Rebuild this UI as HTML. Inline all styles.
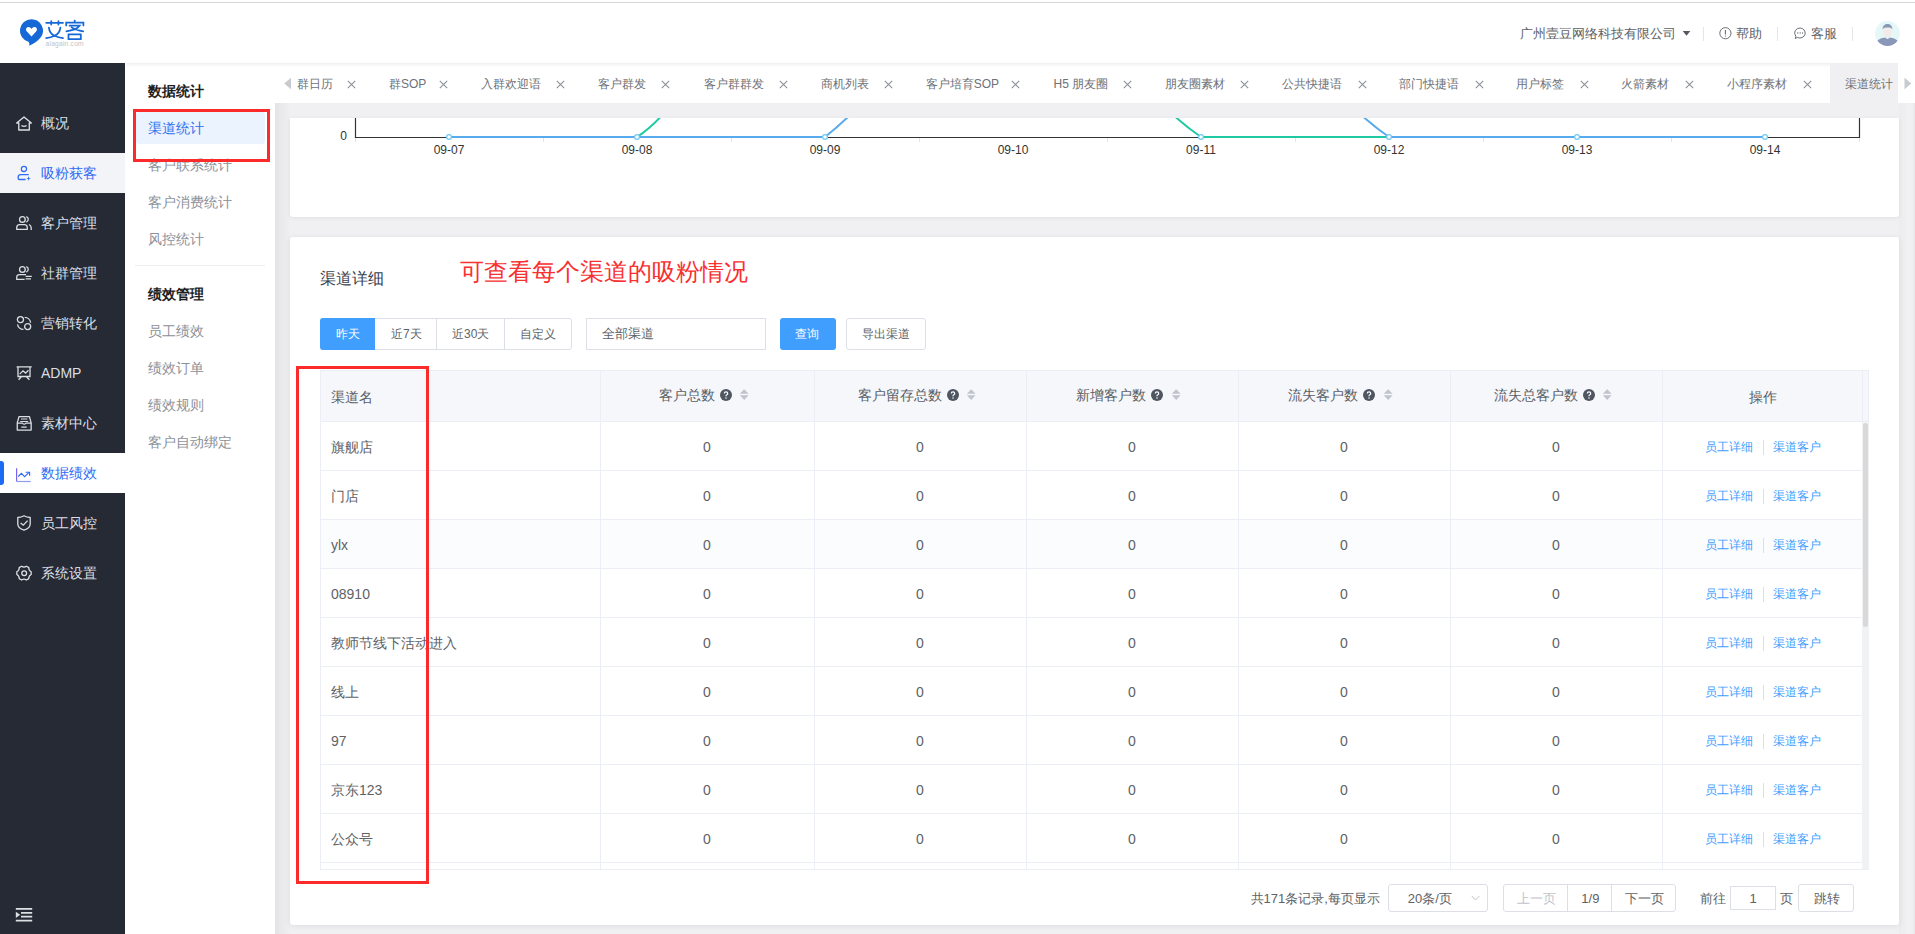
<!DOCTYPE html><html><head><meta charset="utf-8"><style>
*{box-sizing:border-box;margin:0;padding:0}
html,body{width:1915px;height:934px;overflow:hidden;background:#fff;font-family:"Liberation Sans",sans-serif;color:#606266}
.a{position:absolute;white-space:nowrap}
.t{position:absolute;white-space:nowrap;line-height:20px;height:20px}
svg{position:absolute;overflow:visible}
</style></head><body>
<div class="a" style="left:0px;top:0px;width:1915px;height:63px;background:#fff"></div>
<div class="a" style="left:0px;top:2px;width:1915px;height:1px;background:#d7d8db"></div>
<svg style="left:0;top:0" width="100" height="60" viewBox="0 0 100 60">
<path d="M31.4 19.2 A11.5 11.5 0 0 1 40.6 37.6 C37.5 41.5 33 44 29.3 45.8 C29.6 43.8 29.3 42.5 28.4 41.8 A11.5 11.5 0 0 1 31.4 19.2 Z" fill="#1668d6"/>
<path d="M31.5 36.4 L26.9 31.6 C25.3 29.8 26.1 27 28.6 27 C30 27 31 28 31.5 29 C32 28 33 27 34.4 27 C36.9 27 37.7 29.8 36.1 31.6 Z" fill="#fff"/>
</svg>
<svg style="left:0;top:0" width="100" height="60" viewBox="0 0 100 60"><g fill="none" stroke="#1668d6" stroke-width="1.75" stroke-linecap="round">
<path d="M46.2 22.8 H63"/><path d="M51.2 21 V24.6 M58.4 21 V24.6"/>
<path d="M48.9 27.6 Q49.5 33.5 54.6 35.8 Q59.7 33.5 60.4 27.6"/>
<path d="M46.2 38.2 Q51 37.6 54.6 35.8 Q58.2 37.6 63 38.2"/>
<path d="M74.7 20.6 V22.2"/><path d="M66.2 25.4 V22.7 H83.4 V25.4"/>
<path d="M69.6 25.7 H79.6 Q77.5 28.4 74.6 29.4 Q71.2 30.6 66.4 31.4 M71.6 27.4 Q76 30.4 83.2 31.4"/>
<path d="M68.5 34.4 H80.8 V39.1 H68.5 Z"/>
</g></svg>
<div class="a" style="left:45.5px;top:39.8px;font-size:6.6px;line-height:8px;color:#c0c2c6;letter-spacing:0.25px">aiagain.com</div>
<div class="a" style="left:1519.5px;top:23.5px;line-height:20px;font-size:13px;color:#606266;">广州壹豆网络科技有限公司</div>
<svg style="left:1682px;top:30px" width="10" height="7"><path d="M0.7 1 L8.3 1 L4.5 5.8 Z" fill="#555a61"/></svg>
<div class="a" style="left:1703px;top:27px;width:1px;height:14px;background:#e4e6ea"></div>
<svg style="left:1719px;top:27px" width="13" height="13"><circle cx="6.4" cy="6.2" r="5.6" fill="none" stroke="#6a6e75" stroke-width="1"/><path d="M6.4 3 V7.4" stroke="#6a6e75" stroke-width="1.1"/><circle cx="6.4" cy="9.1" r="0.65" fill="#6a6e75"/></svg>
<div class="a" style="left:1736px;top:23.5px;line-height:20px;font-size:13px;color:#606266;">帮助</div>
<div class="a" style="left:1777px;top:27px;width:1px;height:14px;background:#e4e6ea"></div>
<svg style="left:1794px;top:27px" width="13" height="13"><path d="M6.2 1 A5.3 5 0 1 1 3.6 10.5 L1.2 11.4 L1.9 9.2 A5.3 5 0 0 1 6.2 1 Z" fill="none" stroke="#6a6e75" stroke-width="1"/><circle cx="3.8" cy="6" r="0.65" fill="#6a6e75"/><circle cx="6.2" cy="6" r="0.65" fill="#6a6e75"/><circle cx="8.6" cy="6" r="0.65" fill="#6a6e75"/></svg>
<div class="a" style="left:1811px;top:23.5px;line-height:20px;font-size:13px;color:#606266;">客服</div>
<div class="a" style="left:1852px;top:27px;width:1px;height:14px;background:#e4e6ea"></div>
<svg style="left:1875px;top:21px" width="25" height="25" viewBox="0 0 25 25">
<defs><clipPath id="av"><circle cx="12.5" cy="12.5" r="12.4"/></clipPath></defs>
<circle cx="12.5" cy="12.5" r="12.4" fill="#e6f7f7"/>
<g clip-path="url(#av)">
<ellipse cx="12.5" cy="11" rx="4.2" ry="5.2" fill="#f3eaea"/>
<path d="M7.6 8.4 C7.6 4.6 10 3 12.5 3 C15 3 17.4 4.6 17.4 8.4 C16.5 7 15.5 6.6 12.5 6.6 C9.5 6.6 8.5 7 7.6 8.4 Z" fill="#8b97b8"/>
<path d="M1.8 20.2 C4.5 17.4 8.5 16.9 10.5 16.6 C11 17.6 11.7 18 12.5 18 C13.3 18 14 17.6 14.5 16.6 C16.5 16.9 20.5 17.4 23.2 20.2 L23.2 26 L1.8 26 Z" fill="#8b97b8"/>
</g></svg>
<div class="a" style="left:0px;top:63px;width:125px;height:871px;background:#252a34"></div>
<svg style="left:16px;top:115px" width="17" height="17" viewBox="0 0 17 17"><path d="M2.8 15 V8 H0.7 L8 1.9 L15.3 8 H13.3 V15 Z" fill="none" stroke="#dcdfe4" stroke-width="1.35" stroke-linejoin="round"/><path d="M5.4 10.5 Q8 12.4 10.6 10.5" fill="none" stroke="#dcdfe4" stroke-width="1.3"/></svg>
<div class="a" style="left:41px;top:113.0px;line-height:20px;font-size:14px;color:#dcdfe4;">概况</div>
<div class="a" style="left:0px;top:153px;width:125px;height:40px;background:#f3f4f7"></div>
<svg style="left:16px;top:165px" width="17" height="17" viewBox="0 0 17 17"><circle cx="7.95" cy="3.9" r="2.6" fill="none" stroke="#2f6bf5" stroke-width="1.3"/><path d="M12.7 9.6 H4.8 Q2.2 9.6 2.2 12.2 V13.4 Q2.2 14.5 3.3 14.5 H9.6" fill="none" stroke="#2f6bf5" stroke-width="1.3"/><path d="M12.6 11.1 L13.15 12.95 L15 13.5 L13.15 14.05 L12.6 15.9 L12.05 14.05 L10.2 13.5 L12.05 12.95 Z" fill="#2f6bf5"/></svg>
<div class="a" style="left:41px;top:163.0px;line-height:20px;font-size:14px;color:#2f6bf5;">吸粉获客</div>
<svg style="left:16px;top:215px" width="17" height="17" viewBox="0 0 17 17"><circle cx="6.4" cy="4.4" r="2.85" fill="none" stroke="#dcdfe4" stroke-width="1.3"/><path d="M10.3 1.6 A2.9 2.9 0 0 1 10.3 7.1" fill="none" stroke="#dcdfe4" stroke-width="1.3"/><path d="M0.75 14.35 V12.4 Q0.75 9.55 3.6 9.55 H8.4 Q11.25 9.55 11.25 12.4 V14.35 Z" fill="none" stroke="#dcdfe4" stroke-width="1.3"/><path d="M12.9 9.5 Q15.2 10.4 15.2 13 V15" fill="none" stroke="#dcdfe4" stroke-width="1.3"/></svg>
<div class="a" style="left:41px;top:213.0px;line-height:20px;font-size:14px;color:#dcdfe4;">客户管理</div>
<svg style="left:16px;top:265px" width="17" height="17" viewBox="0 0 17 17"><circle cx="6.4" cy="4.4" r="2.85" fill="none" stroke="#dcdfe4" stroke-width="1.3"/><path d="M10.3 1.6 A2.9 2.9 0 0 1 10.3 7.1" fill="none" stroke="#dcdfe4" stroke-width="1.3"/><path d="M10 9.55 H3.6 Q0.75 9.55 0.75 12.4 V14.35 H8.6" fill="none" stroke="#dcdfe4" stroke-width="1.3"/><path d="M9.6 11.45 H15.8 M9.6 13.9 H15" stroke="#dcdfe4" stroke-width="1.3"/></svg>
<div class="a" style="left:41px;top:263.0px;line-height:20px;font-size:14px;color:#dcdfe4;">社群管理</div>
<svg style="left:16px;top:315px" width="17" height="17" viewBox="0 0 17 17"><circle cx="4.45" cy="4.6" r="3.05" fill="none" stroke="#dcdfe4" stroke-width="1.3"/><circle cx="11.65" cy="11.6" r="3.05" fill="none" stroke="#dcdfe4" stroke-width="1.3"/><path d="M8.7 2.3 A6 6 0 0 1 14.6 7.7" fill="none" stroke="#dcdfe4" stroke-width="1.3"/><path d="M1.5 9.3 A6 6 0 0 0 7.5 14.3" fill="none" stroke="#dcdfe4" stroke-width="1.3"/></svg>
<div class="a" style="left:41px;top:313.0px;line-height:20px;font-size:14px;color:#dcdfe4;">营销转化</div>
<svg style="left:16px;top:365px" width="17" height="17" viewBox="0 0 17 17"><path d="M0.6 1.8 H15.7 M2 1.8 V11.5 H14 V1.8 M5.3 11.8 L2.6 14.8 M10.5 11.8 L13.4 14.8" fill="none" stroke="#dcdfe4" stroke-width="1.3"/><path d="M3.7 9.1 L7.05 5.8 L9.6 8.1 L12.5 5.3" fill="none" stroke="#dcdfe4" stroke-width="1.3"/></svg>
<div class="a" style="left:41px;top:363.0px;line-height:20px;font-size:14px;color:#dcdfe4;">ADMP</div>
<svg style="left:16px;top:415px" width="17" height="17" viewBox="0 0 17 17"><path d="M1.25 7.9 L3 1.6 H13.4 L15.15 7.9 V15.1 H1.25 Z" fill="none" stroke="#dcdfe4" stroke-width="1.3" stroke-linejoin="round"/><path d="M1.25 8.1 H6.4 Q8.2 10.3 10 8.1 H15.15 M5 4 H11.4 M4.2 6.5 H12.2 M5.3 12.2 H10.7" fill="none" stroke="#dcdfe4" stroke-width="1.2"/></svg>
<div class="a" style="left:41px;top:413.0px;line-height:20px;font-size:14px;color:#dcdfe4;">素材中心</div>
<div class="a" style="left:0px;top:453px;width:125px;height:40px;background:#fff"></div>
<div class="a" style="left:0;top:461px;width:4px;height:24px;background:#1d6af5;border-radius:0 3px 3px 0"></div>
<svg style="left:16px;top:465px" width="17" height="17" viewBox="0 0 17 17"><path d="M0.6 3.2 V16.5" fill="none" stroke="#7a63f2" stroke-width="1.2"/><path d="M0.6 16.5 H14.8" fill="none" stroke="#8b9cf4" stroke-width="1.2"/><path d="M2.3 11.5 L5.4 8.4 L8.6 11.7 L13 7.4" fill="none" stroke="#2f6bf5" stroke-width="1.1"/><path d="M9.6 7.2 H13.6 V10.8" fill="none" stroke="#2f6bf5" stroke-width="1.1"/></svg>
<div class="a" style="left:41px;top:463.0px;line-height:20px;font-size:14px;color:#2f6bf5;">数据绩效</div>
<svg style="left:16px;top:515px" width="17" height="17" viewBox="0 0 17 17"><path d="M8 0.8 Q10.5 2.4 14.2 2.5 V9 Q14.2 13.2 8 15.1 Q1.8 13.2 1.8 9 V2.5 Q5.5 2.4 8 0.8 Z" fill="none" stroke="#dcdfe4" stroke-width="1.3" stroke-linejoin="round"/><path d="M4.6 7.9 L7.3 10.2 L11.6 5.6" fill="none" stroke="#dcdfe4" stroke-width="1.3"/></svg>
<div class="a" style="left:41px;top:513.0px;line-height:20px;font-size:14px;color:#dcdfe4;">员工风控</div>
<svg style="left:16px;top:565px" width="17" height="17" viewBox="0 0 17 17"><path d="M15.17 6.71 L15.17 9.49 Q12.59 10.75 12.79 13.61 L10.38 15.00 Q8.00 13.40 5.62 15.00 L3.21 13.61 Q3.41 10.75 0.83 9.49 L0.83 6.71 Q3.41 5.45 3.21 2.59 L5.62 1.20 Q8.00 2.80 10.38 1.20 L12.79 2.59 Q12.59 5.45 15.17 6.71 Z" fill="none" stroke="#dcdfe4" stroke-width="1.3" stroke-linejoin="round"/><circle cx="8.2" cy="8.3" r="2.4" fill="none" stroke="#dcdfe4" stroke-width="1.3"/></svg>
<div class="a" style="left:41px;top:563.0px;line-height:20px;font-size:14px;color:#dcdfe4;">系统设置</div>
<svg style="left:15px;top:907px" width="18" height="15" viewBox="0 0 18 15"><path d="M0.8 1.8 H17.2 M6 5.8 H17.2 M6 9.7 H17.2 M0.8 13.7 H17.2" stroke="#dcdfe4" stroke-width="1.8"/><path d="M0.8 4.7 L5.2 7.8 L0.8 10.9 Z" fill="#dcdfe4"/></svg>
<div class="a" style="left:125px;top:63px;width:150px;height:871px;background:#fff"></div>
<div class="a" style="left:148px;top:81.0px;line-height:20px;font-size:14px;color:#1f1f1f;font-weight:bold">数据统计</div>
<div class="a" style="left:136px;top:112px;width:129px;height:32px;background:#ebf3fe;border-radius:3px"></div>
<div class="a" style="left:148px;top:118.0px;line-height:20px;font-size:14px;color:#2f72f0;">渠道统计</div>
<div class="a" style="left:148px;top:155.0px;line-height:20px;font-size:14px;color:#8c9098;">客户联系统计</div>
<div class="a" style="left:148px;top:192.0px;line-height:20px;font-size:14px;color:#8c9098;">客户消费统计</div>
<div class="a" style="left:148px;top:229.0px;line-height:20px;font-size:14px;color:#8c9098;">风控统计</div>
<div class="a" style="left:135px;top:265px;width:130px;height:1px;background:#eceef1"></div>
<div class="a" style="left:148px;top:284.0px;line-height:20px;font-size:14px;color:#1f1f1f;font-weight:bold">绩效管理</div>
<div class="a" style="left:148px;top:321.0px;line-height:20px;font-size:14px;color:#8c9098;">员工绩效</div>
<div class="a" style="left:148px;top:358.0px;line-height:20px;font-size:14px;color:#8c9098;">绩效订单</div>
<div class="a" style="left:148px;top:395.0px;line-height:20px;font-size:14px;color:#8c9098;">绩效规则</div>
<div class="a" style="left:148px;top:432.0px;line-height:20px;font-size:14px;color:#8c9098;">客户自动绑定</div>
<div class="a" style="left:133px;top:109px;width:137px;height:53px;border:3px solid #fb2b2b"></div>
<div class="a" style="left:275px;top:63px;width:1640px;height:871px;background:#f0f0f2"></div>
<div class="a" style="left:275px;top:103px;width:15px;height:831px;background:linear-gradient(to right,#e4e4e6,#e9e9eb 40%,#efeff1)"></div>
<div class="a" style="left:1899px;top:103px;width:16px;height:831px;background:linear-gradient(to right,#ececee,#f1f1f3 60%,#eeeef0 92%,#e2e2e4)"></div>
<div class="a" style="left:275px;top:63px;width:1640px;height:40px;background:#fff"></div>
<div class="a" style="left:126px;top:63px;width:1789px;height:4px;background:linear-gradient(#efefef,rgba(255,255,255,0))"></div>
<svg style="left:283px;top:77px" width="10" height="13"><path d="M8 0.7 L8 12.2 L1.2 6.5 Z" fill="#c8cacd"/></svg>
<div class="a" style="left:296.8px;top:73.5px;line-height:20px;font-size:12px;color:#6d7178;">群日历</div>
<svg style="left:347px;top:80px" width="9" height="9"><path d="M0.8 0.8 L8.2 8.2 M8.2 0.8 L0.8 8.2" stroke="#8a8e95" stroke-width="1.05"/></svg>
<div class="a" style="left:389px;top:73.5px;line-height:20px;font-size:12px;color:#6d7178;">群SOP</div>
<svg style="left:438.6px;top:80px" width="9" height="9"><path d="M0.8 0.8 L8.2 8.2 M8.2 0.8 L0.8 8.2" stroke="#8a8e95" stroke-width="1.05"/></svg>
<div class="a" style="left:481px;top:73.5px;line-height:20px;font-size:12px;color:#6d7178;">入群欢迎语</div>
<svg style="left:555.5px;top:80px" width="9" height="9"><path d="M0.8 0.8 L8.2 8.2 M8.2 0.8 L0.8 8.2" stroke="#8a8e95" stroke-width="1.05"/></svg>
<div class="a" style="left:598px;top:73.5px;line-height:20px;font-size:12px;color:#6d7178;">客户群发</div>
<svg style="left:661px;top:80px" width="9" height="9"><path d="M0.8 0.8 L8.2 8.2 M8.2 0.8 L0.8 8.2" stroke="#8a8e95" stroke-width="1.05"/></svg>
<div class="a" style="left:703.5px;top:73.5px;line-height:20px;font-size:12px;color:#6d7178;">客户群群发</div>
<svg style="left:778.5px;top:80px" width="9" height="9"><path d="M0.8 0.8 L8.2 8.2 M8.2 0.8 L0.8 8.2" stroke="#8a8e95" stroke-width="1.05"/></svg>
<div class="a" style="left:821px;top:73.5px;line-height:20px;font-size:12px;color:#6d7178;">商机列表</div>
<svg style="left:884px;top:80px" width="9" height="9"><path d="M0.8 0.8 L8.2 8.2 M8.2 0.8 L0.8 8.2" stroke="#8a8e95" stroke-width="1.05"/></svg>
<div class="a" style="left:925.7px;top:73.5px;line-height:20px;font-size:12px;color:#6d7178;">客户培育SOP</div>
<svg style="left:1011px;top:80px" width="9" height="9"><path d="M0.8 0.8 L8.2 8.2 M8.2 0.8 L0.8 8.2" stroke="#8a8e95" stroke-width="1.05"/></svg>
<div class="a" style="left:1053.5px;top:73.5px;line-height:20px;font-size:12px;color:#6d7178;">H5 朋友圈</div>
<svg style="left:1122.5px;top:80px" width="9" height="9"><path d="M0.8 0.8 L8.2 8.2 M8.2 0.8 L0.8 8.2" stroke="#8a8e95" stroke-width="1.05"/></svg>
<div class="a" style="left:1164.8px;top:73.5px;line-height:20px;font-size:12px;color:#6d7178;">朋友圈素材</div>
<svg style="left:1239.5px;top:80px" width="9" height="9"><path d="M0.8 0.8 L8.2 8.2 M8.2 0.8 L0.8 8.2" stroke="#8a8e95" stroke-width="1.05"/></svg>
<div class="a" style="left:1282px;top:73.5px;line-height:20px;font-size:12px;color:#6d7178;">公共快捷语</div>
<svg style="left:1357.5px;top:80px" width="9" height="9"><path d="M0.8 0.8 L8.2 8.2 M8.2 0.8 L0.8 8.2" stroke="#8a8e95" stroke-width="1.05"/></svg>
<div class="a" style="left:1399.4px;top:73.5px;line-height:20px;font-size:12px;color:#6d7178;">部门快捷语</div>
<svg style="left:1474.5px;top:80px" width="9" height="9"><path d="M0.8 0.8 L8.2 8.2 M8.2 0.8 L0.8 8.2" stroke="#8a8e95" stroke-width="1.05"/></svg>
<div class="a" style="left:1516px;top:73.5px;line-height:20px;font-size:12px;color:#6d7178;">用户标签</div>
<svg style="left:1579.5px;top:80px" width="9" height="9"><path d="M0.8 0.8 L8.2 8.2 M8.2 0.8 L0.8 8.2" stroke="#8a8e95" stroke-width="1.05"/></svg>
<div class="a" style="left:1621px;top:73.5px;line-height:20px;font-size:12px;color:#6d7178;">火箭素材</div>
<svg style="left:1685px;top:80px" width="9" height="9"><path d="M0.8 0.8 L8.2 8.2 M8.2 0.8 L0.8 8.2" stroke="#8a8e95" stroke-width="1.05"/></svg>
<div class="a" style="left:1727px;top:73.5px;line-height:20px;font-size:12px;color:#6d7178;">小程序素材</div>
<svg style="left:1802.5px;top:80px" width="9" height="9"><path d="M0.8 0.8 L8.2 8.2 M8.2 0.8 L0.8 8.2" stroke="#8a8e95" stroke-width="1.05"/></svg>
<div class="a" style="left:1830px;top:63px;width:68px;height:40px;background:#f0f0f2"></div>
<div class="a" style="left:1844.7px;top:73.5px;line-height:20px;font-size:12px;color:#6d7178;">渠道统计</div>
<div class="a" style="left:1898px;top:63px;width:17px;height:40px;background:#fff"></div>
<svg style="left:1903px;top:77px" width="10" height="13"><path d="M1.5 0.7 L1.5 12.2 L8.3 6.5 Z" fill="#c8cacd"/></svg>
<div class="a" style="left:290px;top:118px;width:1609px;height:99px;background:#fff;border-radius:0 0 3px 3px;box-shadow:0 1px 4px rgba(0,0,0,.07)"></div>
<svg style="left:0;top:0" width="1915" height="240" viewBox="0 0 1915 240"><defs><clipPath id="cc"><rect x="290" y="118" width="1609" height="99"/></clipPath></defs><g clip-path="url(#cc)"><path d="M355.5 137 V142" stroke="#e3e3e3" stroke-width="1"/><path d="M543.5 137 V142" stroke="#e3e3e3" stroke-width="1"/><path d="M731.5 137 V142" stroke="#e3e3e3" stroke-width="1"/><path d="M919.5 137 V142" stroke="#e3e3e3" stroke-width="1"/><path d="M1107.5 137 V142" stroke="#e3e3e3" stroke-width="1"/><path d="M1295.5 137 V142" stroke="#e3e3e3" stroke-width="1"/><path d="M1483.5 137 V142" stroke="#e3e3e3" stroke-width="1"/><path d="M1671.5 137 V142" stroke="#e3e3e3" stroke-width="1"/><path d="M1859.5 137 V142" stroke="#e3e3e3" stroke-width="1"/><path d="M355.5 110 V137.5 H1859.5 V110" fill="none" stroke="#333" stroke-width="1.2"/><path d="M449 137 H825" stroke="#58aaec" stroke-width="2"/><path d="M637 137 Q651 128 665 112" fill="none" stroke="#1fc9a2" stroke-width="2"/><path d="M825 137 Q839 126 853 112" fill="none" stroke="#58aaec" stroke-width="2"/><path d="M1201 137 H1389" stroke="#1fc9a2" stroke-width="2"/><path d="M1201 137 Q1185 126 1170 112" fill="none" stroke="#1fc9a2" stroke-width="2"/><path d="M1389 137 H1765" stroke="#58aaec" stroke-width="2"/><path d="M1389 137 Q1373 126 1358 112" fill="none" stroke="#58aaec" stroke-width="2"/><circle cx="449" cy="137" r="2.4" fill="#fff" stroke="#74c8f0" stroke-width="1.3"/><circle cx="637" cy="137" r="2.4" fill="#fff" stroke="#74c8f0" stroke-width="1.3"/><circle cx="825" cy="137" r="2.4" fill="#fff" stroke="#74c8f0" stroke-width="1.3"/><circle cx="1201" cy="137" r="2.4" fill="#fff" stroke="#74c8f0" stroke-width="1.3"/><circle cx="1389" cy="137" r="2.4" fill="#fff" stroke="#74c8f0" stroke-width="1.3"/><circle cx="1577" cy="137" r="2.4" fill="#fff" stroke="#74c8f0" stroke-width="1.3"/><circle cx="1765" cy="137" r="2.4" fill="#fff" stroke="#74c8f0" stroke-width="1.3"/></g></svg>
<div class="a" style="left:307px;top:125.5px;width:40px;text-align:right;line-height:20px;font-size:12px;color:#333;">0</div>
<div class="a" style="left:419.0px;top:139.5px;width:60px;text-align:center;line-height:20px;font-size:12px;color:#333;">09-07</div>
<div class="a" style="left:607.0px;top:139.5px;width:60px;text-align:center;line-height:20px;font-size:12px;color:#333;">09-08</div>
<div class="a" style="left:795.0px;top:139.5px;width:60px;text-align:center;line-height:20px;font-size:12px;color:#333;">09-09</div>
<div class="a" style="left:983.0px;top:139.5px;width:60px;text-align:center;line-height:20px;font-size:12px;color:#333;">09-10</div>
<div class="a" style="left:1171.0px;top:139.5px;width:60px;text-align:center;line-height:20px;font-size:12px;color:#333;">09-11</div>
<div class="a" style="left:1359.0px;top:139.5px;width:60px;text-align:center;line-height:20px;font-size:12px;color:#333;">09-12</div>
<div class="a" style="left:1547.0px;top:139.5px;width:60px;text-align:center;line-height:20px;font-size:12px;color:#333;">09-13</div>
<div class="a" style="left:1735.0px;top:139.5px;width:60px;text-align:center;line-height:20px;font-size:12px;color:#333;">09-14</div>
<div class="a" style="left:290px;top:237px;width:1609px;height:688px;background:#fff;border-radius:3px;box-shadow:0 1px 6px rgba(0,0,0,.08)"></div>
<div class="a" style="left:320px;top:268.3px;line-height:22px;font-size:16px;color:#394350;">渠道详细</div>
<div class="a" style="left:460px;top:257.0px;line-height:30px;font-size:24px;color:#f8302f;">可查看每个渠道的吸粉情况</div>
<div class="a" style="left:320px;top:318px;width:252px;height:32px;border:1px solid #dcdfe6;border-radius:3px"></div>
<div class="a" style="left:320px;top:318px;width:55px;height:32px;background:#409eff;border-radius:3px 0 0 3px"></div>
<div class="a" style="left:436px;top:318px;width:1px;height:32px;background:#dcdfe6"></div>
<div class="a" style="left:504px;top:318px;width:1px;height:32px;background:#dcdfe6"></div>
<div class="a" style="left:336px;top:324.0px;line-height:20px;font-size:12px;color:#fff;">昨天</div>
<div class="a" style="left:391px;top:324.0px;line-height:20px;font-size:12px;color:#606266;">近7天</div>
<div class="a" style="left:452px;top:324.0px;line-height:20px;font-size:12px;color:#606266;">近30天</div>
<div class="a" style="left:520px;top:324.0px;line-height:20px;font-size:12px;color:#606266;">自定义</div>
<div class="a" style="left:586px;top:318px;width:180px;height:32px;border:1px solid #dcdfe6"></div>
<div class="a" style="left:602px;top:324.0px;line-height:20px;font-size:13px;color:#606266;">全部渠道</div>
<div class="a" style="left:780px;top:318px;width:56px;height:32px;background:#409eff;border-radius:3px"></div>
<div class="a" style="left:795px;top:324.0px;line-height:20px;font-size:12px;color:#fff;">查询</div>
<div class="a" style="left:846px;top:318px;width:80px;height:32px;border:1px solid #dcdfe6;border-radius:3px"></div>
<div class="a" style="left:861.5px;top:324.0px;line-height:20px;font-size:12px;color:#606266;">导出渠道</div>
<div class="a" style="left:320px;top:370px;width:1549px;height:51px;background:#f5f7fa"></div>
<div class="a" style="left:321px;top:520px;width:1541px;height:48px;background:#fbfcfd"></div>
<div class="a" style="left:320px;top:370px;width:1549px;height:1px;background:#ebeef5"></div>
<div class="a" style="left:600px;top:370px;width:1px;height:500px;background:#ebeef5"></div>
<div class="a" style="left:814px;top:370px;width:1px;height:500px;background:#ebeef5"></div>
<div class="a" style="left:1026px;top:370px;width:1px;height:500px;background:#ebeef5"></div>
<div class="a" style="left:1238px;top:370px;width:1px;height:500px;background:#ebeef5"></div>
<div class="a" style="left:1450px;top:370px;width:1px;height:500px;background:#ebeef5"></div>
<div class="a" style="left:1662px;top:370px;width:1px;height:500px;background:#ebeef5"></div>
<div class="a" style="left:320px;top:370px;width:1px;height:500px;background:#ebeef5"></div>
<div class="a" style="left:1862px;top:370px;width:1px;height:51px;background:#ebeef5"></div>
<div class="a" style="left:1868px;top:370px;width:1px;height:500px;background:#ebeef5"></div>
<div class="a" style="left:320px;top:421px;width:1549px;height:1px;background:#ebeef5"></div>
<div class="a" style="left:320px;top:470px;width:1542px;height:1px;background:#ebeef5"></div>
<div class="a" style="left:320px;top:519px;width:1542px;height:1px;background:#ebeef5"></div>
<div class="a" style="left:320px;top:568px;width:1542px;height:1px;background:#ebeef5"></div>
<div class="a" style="left:320px;top:617px;width:1542px;height:1px;background:#ebeef5"></div>
<div class="a" style="left:320px;top:666px;width:1542px;height:1px;background:#ebeef5"></div>
<div class="a" style="left:320px;top:715px;width:1542px;height:1px;background:#ebeef5"></div>
<div class="a" style="left:320px;top:764px;width:1542px;height:1px;background:#ebeef5"></div>
<div class="a" style="left:320px;top:813px;width:1542px;height:1px;background:#ebeef5"></div>
<div class="a" style="left:320px;top:862px;width:1542px;height:1px;background:#ebeef5"></div>
<div class="a" style="left:320px;top:869px;width:1549px;height:1px;background:#ebeef5"></div>
<div class="a" style="left:1862px;top:422px;width:7px;height:447px;background:#f1f2f4"></div>
<div class="a" style="left:1863px;top:423px;width:5px;height:204px;background:#d9d9d9;border-radius:3px"></div>
<div class="a" style="left:331px;top:387.0px;line-height:20px;font-size:14px;color:#5a5e66;">渠道名</div>
<div class="a" style="left:658.6px;top:385.0px;line-height:20px;font-size:14px;color:#5a5e66;">客户总数</div>
<svg style="left:719.6px;top:389px" width="12" height="12" viewBox="0 0 12 12"><circle cx="6" cy="6" r="6" fill="#4f5661"/><path d="M4.3 4.6 Q4.3 2.9 6 2.9 Q7.7 2.9 7.7 4.4 Q7.7 5.3 6.8 5.8 Q6 6.2 6 7.2" fill="none" stroke="#fff" stroke-width="1.25"/><circle cx="6" cy="8.9" r="0.75" fill="#fff"/></svg>
<svg style="left:739px;top:388px" width="11" height="13" viewBox="0 0 11 13"><path d="M5.2 1.2 L9.6 5.8 H0.8 Z M5.2 12 L9.6 7.2 H0.8 Z" fill="#c0c4cc"/></svg>
<div class="a" style="left:857.9px;top:385.0px;line-height:20px;font-size:14px;color:#5a5e66;">客户留存总数</div>
<svg style="left:946.6px;top:389px" width="12" height="12" viewBox="0 0 12 12"><circle cx="6" cy="6" r="6" fill="#4f5661"/><path d="M4.3 4.6 Q4.3 2.9 6 2.9 Q7.7 2.9 7.7 4.4 Q7.7 5.3 6.8 5.8 Q6 6.2 6 7.2" fill="none" stroke="#fff" stroke-width="1.25"/><circle cx="6" cy="8.9" r="0.75" fill="#fff"/></svg>
<svg style="left:966px;top:388px" width="11" height="13" viewBox="0 0 11 13"><path d="M5.2 1.2 L9.6 5.8 H0.8 Z M5.2 12 L9.6 7.2 H0.8 Z" fill="#c0c4cc"/></svg>
<div class="a" style="left:1076.3px;top:385.0px;line-height:20px;font-size:14px;color:#5a5e66;">新增客户数</div>
<svg style="left:1151.2px;top:389px" width="12" height="12" viewBox="0 0 12 12"><circle cx="6" cy="6" r="6" fill="#4f5661"/><path d="M4.3 4.6 Q4.3 2.9 6 2.9 Q7.7 2.9 7.7 4.4 Q7.7 5.3 6.8 5.8 Q6 6.2 6 7.2" fill="none" stroke="#fff" stroke-width="1.25"/><circle cx="6" cy="8.9" r="0.75" fill="#fff"/></svg>
<svg style="left:1171px;top:388px" width="11" height="13" viewBox="0 0 11 13"><path d="M5.2 1.2 L9.6 5.8 H0.8 Z M5.2 12 L9.6 7.2 H0.8 Z" fill="#c0c4cc"/></svg>
<div class="a" style="left:1288.3px;top:385.0px;line-height:20px;font-size:14px;color:#5a5e66;">流失客户数</div>
<svg style="left:1363.4px;top:389px" width="12" height="12" viewBox="0 0 12 12"><circle cx="6" cy="6" r="6" fill="#4f5661"/><path d="M4.3 4.6 Q4.3 2.9 6 2.9 Q7.7 2.9 7.7 4.4 Q7.7 5.3 6.8 5.8 Q6 6.2 6 7.2" fill="none" stroke="#fff" stroke-width="1.25"/><circle cx="6" cy="8.9" r="0.75" fill="#fff"/></svg>
<svg style="left:1382.8px;top:388px" width="11" height="13" viewBox="0 0 11 13"><path d="M5.2 1.2 L9.6 5.8 H0.8 Z M5.2 12 L9.6 7.2 H0.8 Z" fill="#c0c4cc"/></svg>
<div class="a" style="left:1493.6px;top:385.0px;line-height:20px;font-size:14px;color:#5a5e66;">流失总客户数</div>
<svg style="left:1582.5px;top:389px" width="12" height="12" viewBox="0 0 12 12"><circle cx="6" cy="6" r="6" fill="#4f5661"/><path d="M4.3 4.6 Q4.3 2.9 6 2.9 Q7.7 2.9 7.7 4.4 Q7.7 5.3 6.8 5.8 Q6 6.2 6 7.2" fill="none" stroke="#fff" stroke-width="1.25"/><circle cx="6" cy="8.9" r="0.75" fill="#fff"/></svg>
<svg style="left:1602px;top:388px" width="11" height="13" viewBox="0 0 11 13"><path d="M5.2 1.2 L9.6 5.8 H0.8 Z M5.2 12 L9.6 7.2 H0.8 Z" fill="#c0c4cc"/></svg>
<div class="a" style="left:1748.5px;top:387.0px;line-height:20px;font-size:14px;color:#5a5e66;">操作</div>
<div class="a" style="left:331px;top:437.0px;line-height:20px;font-size:14px;color:#606266;">旗舰店</div>
<div class="a" style="left:687.0px;top:437.0px;width:40px;text-align:center;line-height:20px;font-size:14px;color:#606266;">0</div>
<div class="a" style="left:900.0px;top:437.0px;width:40px;text-align:center;line-height:20px;font-size:14px;color:#606266;">0</div>
<div class="a" style="left:1112.0px;top:437.0px;width:40px;text-align:center;line-height:20px;font-size:14px;color:#606266;">0</div>
<div class="a" style="left:1324.0px;top:437.0px;width:40px;text-align:center;line-height:20px;font-size:14px;color:#606266;">0</div>
<div class="a" style="left:1536.0px;top:437.0px;width:40px;text-align:center;line-height:20px;font-size:14px;color:#606266;">0</div>
<div class="a" style="left:1704.5px;top:437.0px;line-height:20px;font-size:12px;color:#409eff;">员工详细</div>
<div class="a" style="left:1763px;top:439.5px;width:1px;height:15px;background:#dcdfe6"></div>
<div class="a" style="left:1773.3px;top:437.0px;line-height:20px;font-size:12px;color:#409eff;">渠道客户</div>
<div class="a" style="left:331px;top:486.0px;line-height:20px;font-size:14px;color:#606266;">门店</div>
<div class="a" style="left:687.0px;top:486.0px;width:40px;text-align:center;line-height:20px;font-size:14px;color:#606266;">0</div>
<div class="a" style="left:900.0px;top:486.0px;width:40px;text-align:center;line-height:20px;font-size:14px;color:#606266;">0</div>
<div class="a" style="left:1112.0px;top:486.0px;width:40px;text-align:center;line-height:20px;font-size:14px;color:#606266;">0</div>
<div class="a" style="left:1324.0px;top:486.0px;width:40px;text-align:center;line-height:20px;font-size:14px;color:#606266;">0</div>
<div class="a" style="left:1536.0px;top:486.0px;width:40px;text-align:center;line-height:20px;font-size:14px;color:#606266;">0</div>
<div class="a" style="left:1704.5px;top:486.0px;line-height:20px;font-size:12px;color:#409eff;">员工详细</div>
<div class="a" style="left:1763px;top:488.5px;width:1px;height:15px;background:#dcdfe6"></div>
<div class="a" style="left:1773.3px;top:486.0px;line-height:20px;font-size:12px;color:#409eff;">渠道客户</div>
<div class="a" style="left:331px;top:535.0px;line-height:20px;font-size:14px;color:#606266;">ylx</div>
<div class="a" style="left:687.0px;top:535.0px;width:40px;text-align:center;line-height:20px;font-size:14px;color:#606266;">0</div>
<div class="a" style="left:900.0px;top:535.0px;width:40px;text-align:center;line-height:20px;font-size:14px;color:#606266;">0</div>
<div class="a" style="left:1112.0px;top:535.0px;width:40px;text-align:center;line-height:20px;font-size:14px;color:#606266;">0</div>
<div class="a" style="left:1324.0px;top:535.0px;width:40px;text-align:center;line-height:20px;font-size:14px;color:#606266;">0</div>
<div class="a" style="left:1536.0px;top:535.0px;width:40px;text-align:center;line-height:20px;font-size:14px;color:#606266;">0</div>
<div class="a" style="left:1704.5px;top:535.0px;line-height:20px;font-size:12px;color:#409eff;">员工详细</div>
<div class="a" style="left:1763px;top:537.5px;width:1px;height:15px;background:#dcdfe6"></div>
<div class="a" style="left:1773.3px;top:535.0px;line-height:20px;font-size:12px;color:#409eff;">渠道客户</div>
<div class="a" style="left:331px;top:584.0px;line-height:20px;font-size:14px;color:#606266;">08910</div>
<div class="a" style="left:687.0px;top:584.0px;width:40px;text-align:center;line-height:20px;font-size:14px;color:#606266;">0</div>
<div class="a" style="left:900.0px;top:584.0px;width:40px;text-align:center;line-height:20px;font-size:14px;color:#606266;">0</div>
<div class="a" style="left:1112.0px;top:584.0px;width:40px;text-align:center;line-height:20px;font-size:14px;color:#606266;">0</div>
<div class="a" style="left:1324.0px;top:584.0px;width:40px;text-align:center;line-height:20px;font-size:14px;color:#606266;">0</div>
<div class="a" style="left:1536.0px;top:584.0px;width:40px;text-align:center;line-height:20px;font-size:14px;color:#606266;">0</div>
<div class="a" style="left:1704.5px;top:584.0px;line-height:20px;font-size:12px;color:#409eff;">员工详细</div>
<div class="a" style="left:1763px;top:586.5px;width:1px;height:15px;background:#dcdfe6"></div>
<div class="a" style="left:1773.3px;top:584.0px;line-height:20px;font-size:12px;color:#409eff;">渠道客户</div>
<div class="a" style="left:331px;top:633.0px;line-height:20px;font-size:14px;color:#606266;">教师节线下活动进入</div>
<div class="a" style="left:687.0px;top:633.0px;width:40px;text-align:center;line-height:20px;font-size:14px;color:#606266;">0</div>
<div class="a" style="left:900.0px;top:633.0px;width:40px;text-align:center;line-height:20px;font-size:14px;color:#606266;">0</div>
<div class="a" style="left:1112.0px;top:633.0px;width:40px;text-align:center;line-height:20px;font-size:14px;color:#606266;">0</div>
<div class="a" style="left:1324.0px;top:633.0px;width:40px;text-align:center;line-height:20px;font-size:14px;color:#606266;">0</div>
<div class="a" style="left:1536.0px;top:633.0px;width:40px;text-align:center;line-height:20px;font-size:14px;color:#606266;">0</div>
<div class="a" style="left:1704.5px;top:633.0px;line-height:20px;font-size:12px;color:#409eff;">员工详细</div>
<div class="a" style="left:1763px;top:635.5px;width:1px;height:15px;background:#dcdfe6"></div>
<div class="a" style="left:1773.3px;top:633.0px;line-height:20px;font-size:12px;color:#409eff;">渠道客户</div>
<div class="a" style="left:331px;top:682.0px;line-height:20px;font-size:14px;color:#606266;">线上</div>
<div class="a" style="left:687.0px;top:682.0px;width:40px;text-align:center;line-height:20px;font-size:14px;color:#606266;">0</div>
<div class="a" style="left:900.0px;top:682.0px;width:40px;text-align:center;line-height:20px;font-size:14px;color:#606266;">0</div>
<div class="a" style="left:1112.0px;top:682.0px;width:40px;text-align:center;line-height:20px;font-size:14px;color:#606266;">0</div>
<div class="a" style="left:1324.0px;top:682.0px;width:40px;text-align:center;line-height:20px;font-size:14px;color:#606266;">0</div>
<div class="a" style="left:1536.0px;top:682.0px;width:40px;text-align:center;line-height:20px;font-size:14px;color:#606266;">0</div>
<div class="a" style="left:1704.5px;top:682.0px;line-height:20px;font-size:12px;color:#409eff;">员工详细</div>
<div class="a" style="left:1763px;top:684.5px;width:1px;height:15px;background:#dcdfe6"></div>
<div class="a" style="left:1773.3px;top:682.0px;line-height:20px;font-size:12px;color:#409eff;">渠道客户</div>
<div class="a" style="left:331px;top:731.0px;line-height:20px;font-size:14px;color:#606266;">97</div>
<div class="a" style="left:687.0px;top:731.0px;width:40px;text-align:center;line-height:20px;font-size:14px;color:#606266;">0</div>
<div class="a" style="left:900.0px;top:731.0px;width:40px;text-align:center;line-height:20px;font-size:14px;color:#606266;">0</div>
<div class="a" style="left:1112.0px;top:731.0px;width:40px;text-align:center;line-height:20px;font-size:14px;color:#606266;">0</div>
<div class="a" style="left:1324.0px;top:731.0px;width:40px;text-align:center;line-height:20px;font-size:14px;color:#606266;">0</div>
<div class="a" style="left:1536.0px;top:731.0px;width:40px;text-align:center;line-height:20px;font-size:14px;color:#606266;">0</div>
<div class="a" style="left:1704.5px;top:731.0px;line-height:20px;font-size:12px;color:#409eff;">员工详细</div>
<div class="a" style="left:1763px;top:733.5px;width:1px;height:15px;background:#dcdfe6"></div>
<div class="a" style="left:1773.3px;top:731.0px;line-height:20px;font-size:12px;color:#409eff;">渠道客户</div>
<div class="a" style="left:331px;top:780.0px;line-height:20px;font-size:14px;color:#606266;">京东123</div>
<div class="a" style="left:687.0px;top:780.0px;width:40px;text-align:center;line-height:20px;font-size:14px;color:#606266;">0</div>
<div class="a" style="left:900.0px;top:780.0px;width:40px;text-align:center;line-height:20px;font-size:14px;color:#606266;">0</div>
<div class="a" style="left:1112.0px;top:780.0px;width:40px;text-align:center;line-height:20px;font-size:14px;color:#606266;">0</div>
<div class="a" style="left:1324.0px;top:780.0px;width:40px;text-align:center;line-height:20px;font-size:14px;color:#606266;">0</div>
<div class="a" style="left:1536.0px;top:780.0px;width:40px;text-align:center;line-height:20px;font-size:14px;color:#606266;">0</div>
<div class="a" style="left:1704.5px;top:780.0px;line-height:20px;font-size:12px;color:#409eff;">员工详细</div>
<div class="a" style="left:1763px;top:782.5px;width:1px;height:15px;background:#dcdfe6"></div>
<div class="a" style="left:1773.3px;top:780.0px;line-height:20px;font-size:12px;color:#409eff;">渠道客户</div>
<div class="a" style="left:331px;top:829.0px;line-height:20px;font-size:14px;color:#606266;">公众号</div>
<div class="a" style="left:687.0px;top:829.0px;width:40px;text-align:center;line-height:20px;font-size:14px;color:#606266;">0</div>
<div class="a" style="left:900.0px;top:829.0px;width:40px;text-align:center;line-height:20px;font-size:14px;color:#606266;">0</div>
<div class="a" style="left:1112.0px;top:829.0px;width:40px;text-align:center;line-height:20px;font-size:14px;color:#606266;">0</div>
<div class="a" style="left:1324.0px;top:829.0px;width:40px;text-align:center;line-height:20px;font-size:14px;color:#606266;">0</div>
<div class="a" style="left:1536.0px;top:829.0px;width:40px;text-align:center;line-height:20px;font-size:14px;color:#606266;">0</div>
<div class="a" style="left:1704.5px;top:829.0px;line-height:20px;font-size:12px;color:#409eff;">员工详细</div>
<div class="a" style="left:1763px;top:831.5px;width:1px;height:15px;background:#dcdfe6"></div>
<div class="a" style="left:1773.3px;top:829.0px;line-height:20px;font-size:12px;color:#409eff;">渠道客户</div>
<div class="a" style="left:296px;top:366px;width:133px;height:518px;border:3px solid #fb2b2b"></div>
<div class="a" style="left:1250.6px;top:888.6px;line-height:20px;font-size:13px;color:#606266;">共171条记录,每页显示</div>
<div class="a" style="left:1388px;top:884px;width:100px;height:28px;border:1px solid #dcdfe6;border-radius:3px"></div>
<div class="a" style="left:1407.7px;top:888.6px;line-height:20px;font-size:13px;color:#606266;">20条/页</div>
<svg style="left:1471px;top:894.5px" width="10" height="7"><path d="M0.8 1 L4.6 5 L8.4 1" fill="none" stroke="#c0c4cc" stroke-width="1"/></svg>
<div class="a" style="left:1503px;top:884px;width:173px;height:28px;border:1px solid #dcdfe6;border-radius:3px"></div>
<div class="a" style="left:1567px;top:884px;width:1px;height:28px;background:#dcdfe6"></div>
<div class="a" style="left:1611px;top:884px;width:1px;height:28px;background:#dcdfe6"></div>
<div class="a" style="left:1516.8px;top:888.6px;line-height:20px;font-size:13px;color:#c0c4cc;">上一页</div>
<div class="a" style="left:1581.3px;top:888.6px;line-height:20px;font-size:13px;color:#606266;">1/9</div>
<div class="a" style="left:1624.5px;top:888.6px;line-height:20px;font-size:13px;color:#606266;">下一页</div>
<div class="a" style="left:1700.4px;top:888.6px;line-height:20px;font-size:13px;color:#606266;">前往</div>
<div class="a" style="left:1730px;top:886px;width:46px;height:24px;border:1px solid #dcdfe6"></div>
<div class="a" style="left:1738.0px;top:888.6px;width:30px;text-align:center;line-height:20px;font-size:13px;color:#606266;">1</div>
<div class="a" style="left:1780px;top:888.6px;line-height:20px;font-size:13px;color:#606266;">页</div>
<div class="a" style="left:1798px;top:884px;width:56px;height:28px;border:1px solid #dcdfe6;border-radius:3px"></div>
<div class="a" style="left:1813.9px;top:888.6px;line-height:20px;font-size:13px;color:#606266;">跳转</div>
</body></html>
